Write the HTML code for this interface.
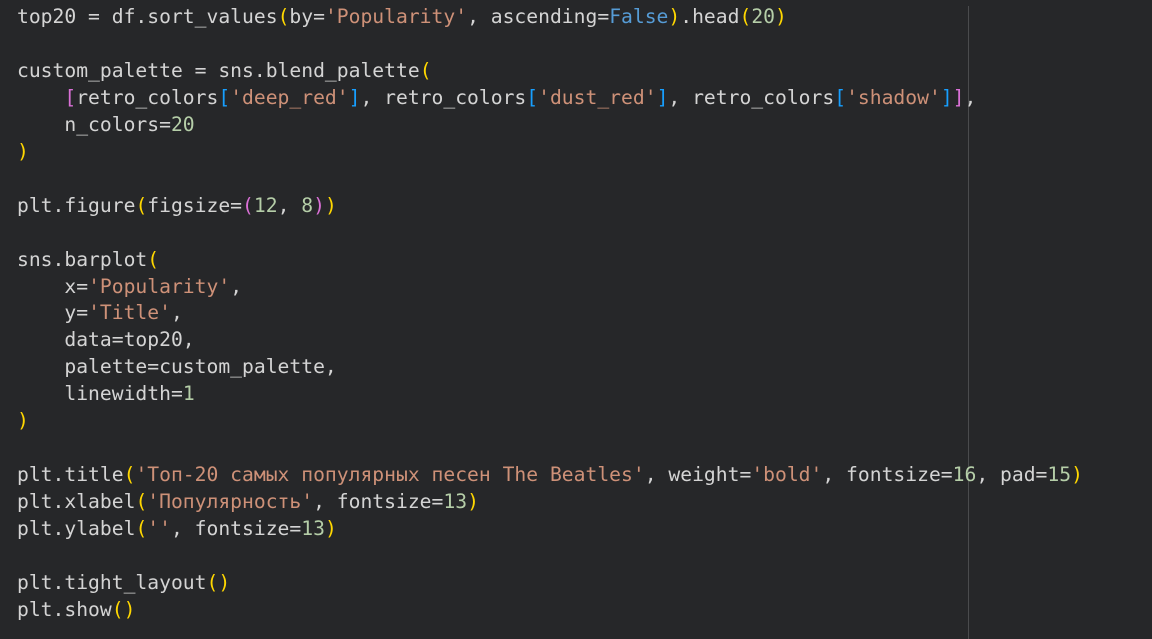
<!DOCTYPE html>
<html><head><meta charset="utf-8"><style>
html,body{margin:0;padding:0;background:#262729;width:1152px;height:639px;overflow:hidden}
pre{margin:0;position:absolute;left:17px;top:4px;font-family:"DejaVu Sans Mono","Liberation Mono",monospace;font-size:19.68px;line-height:26.95px;color:#d4d4d4;white-space:pre}
.s{color:#ce9178}.n{color:#b5cea8}.k{color:#569cd6}.y{color:#ffd700}.p{color:#da70d6}.b{color:#179fff}
.rule{position:absolute;left:968px;top:6px;width:1px;height:633px;background:#4a4b4d}
</style></head><body>
<div class="rule"></div>
<pre>top20 = df.sort_values<span class="y">(</span>by=<span class="s">'Popularity'</span>, ascending=<span class="k">False</span><span class="y">)</span>.head<span class="y">(</span><span class="n">20</span><span class="y">)</span>

custom_palette = sns.blend_palette<span class="y">(</span>
    <span class="p">[</span>retro_colors<span class="b">[</span><span class="s">'deep_red'</span><span class="b">]</span>, retro_colors<span class="b">[</span><span class="s">'dust_red'</span><span class="b">]</span>, retro_colors<span class="b">[</span><span class="s">'shadow'</span><span class="b">]</span><span class="p">]</span>,
    n_colors=<span class="n">20</span>
<span class="y">)</span>

plt.figure<span class="y">(</span>figsize=<span class="p">(</span><span class="n">12</span>, <span class="n">8</span><span class="p">)</span><span class="y">)</span>

sns.barplot<span class="y">(</span>
    x=<span class="s">'Popularity'</span>,
    y=<span class="s">'Title'</span>,
    data=top20,
    palette=custom_palette,
    linewidth=<span class="n">1</span>
<span class="y">)</span>

plt.title<span class="y">(</span><span class="s">'Топ-20 самых популярных песен The Beatles'</span>, weight=<span class="s">'bold'</span>, fontsize=<span class="n">16</span>, pad=<span class="n">15</span><span class="y">)</span>
plt.xlabel<span class="y">(</span><span class="s">'Популярность'</span>, fontsize=<span class="n">13</span><span class="y">)</span>
plt.ylabel<span class="y">(</span><span class="s">''</span>, fontsize=<span class="n">13</span><span class="y">)</span>

plt.tight_layout<span class="y">()</span>
plt.show<span class="y">()</span></pre>
</body></html>
